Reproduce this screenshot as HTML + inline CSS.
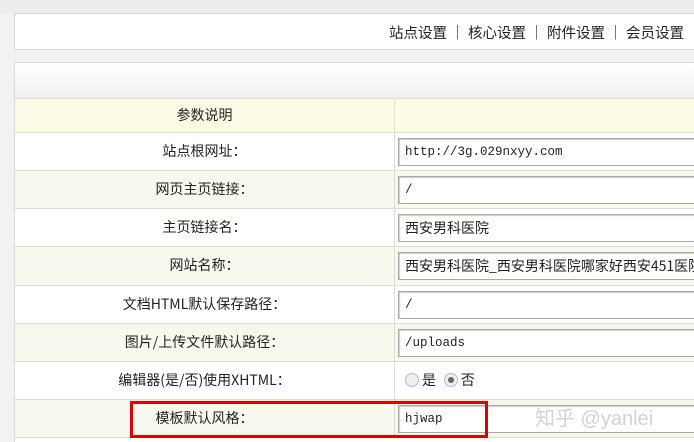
<!DOCTYPE html><html><head><meta charset="utf-8"><style>
html,body{margin:0;width:694px;height:442px;overflow:hidden}
body{background:#f2f2f2;font-family:"Liberation Sans","Noto Sans CJK SC",sans-serif;font-size:14px;color:#222;position:relative}
.top{position:absolute;left:0;top:0;width:694px;height:13px;background:#ededed}
.p1{position:absolute;left:14px;top:13px;width:690px;height:35px;background:#fff;border:1px solid #d8d8d8;border-right:none}
.nav{position:absolute;left:374px;top:8px;font-size:14.5px;white-space:nowrap;font-family:"Noto Sans CJK SC",sans-serif}
.p2{position:absolute;left:14px;top:62px;width:690px;height:400px;background:#fff;border:1px solid #d8d8d8;border-right:none}
.hd{height:35px;background:linear-gradient(#fff,#f0f0f0);border-bottom:1px solid #ddd}
.row{position:relative;border-bottom:1px solid #dcdcd0;height:37px}
.l{position:absolute;left:0;width:379px;height:100%;border-right:1px solid #dcdcd0;text-align:center;line-height:37px;font-family:"Noto Sans CJK SC",sans-serif}
.r{position:absolute;left:380px;right:0;height:100%}
.in{position:absolute;left:3px;top:5px;width:400px;height:26px;border:1px solid #a8a8a8;border-right:none;box-shadow:inset 1px 1px 1px #ccc;background:#fff;font-family:"Liberation Mono","Noto Sans CJK SC",monospace;font-size:12.5px;line-height:26px;padding-left:6px;white-space:nowrap;overflow:hidden}
.zh{font-family:"Noto Sans CJK SC",sans-serif;font-size:14px}
.t{background:#f8f9ee}
.rad{display:inline-block;width:12px;height:12px;border-radius:50%;border:1px solid #bbb;background:#eee;vertical-align:-2px;margin-right:3px;position:relative}
</style></head><body>
<div class="top"></div>
<div class="p1"><div class="nav">站点设置 ｜ 核心设置 ｜ 附件设置 ｜ 会员设置</div></div>
<div class="p2">
<div class="hd"></div>
<div class="row" style="background:#fbfbe6;height:33px"><div class="l" style="line-height:33px;border-color:#e4e4cc">参数说明</div></div>
<div class="row"><div class="l">站点根网址：</div><div class="r"><div class="in">http://3g.029nxyy.com</div></div></div>
<div class="row t"><div class="l">网页主页链接：</div><div class="r"><div class="in">/</div></div></div>
<div class="row"><div class="l">主页链接名：</div><div class="r"><div class="in zh">西安男科医院</div></div></div>
<div class="row t" style="height:38px"><div class="l">网站名称：</div><div class="r"><div class="in zh">西安男科医院_西安男科医院哪家好西安451医院</div></div></div>
<div class="row"><div class="l">文档HTML默认保存路径：</div><div class="r"><div class="in">/</div></div></div>
<div class="row t"><div class="l">图片/上传文件默认路径：</div><div class="r"><div class="in">/uploads</div></div></div>
<div class="row"><div class="l">编辑器(是/否)使用XHTML：</div><div class="r" style="line-height:37px;padding-left:10px;font-size:14px"><span class="rad"></span>是 &nbsp;<span class="rad"><span style="position:absolute;left:3px;top:3px;width:6px;height:6px;border-radius:50%;background:#666"></span></span>否</div></div>
<div class="row t"><div class="l">模板默认风格：</div><div class="r"><div class="in">hjwap</div><div style="position:absolute;left:140px;top:2px;font-size:20px;color:rgba(200,200,200,.8);font-family:'Liberation Sans','Noto Sans CJK SC',sans-serif">知乎 @yanlei</div></div></div>
</div>
<div style="position:absolute;left:130px;top:401px;width:352px;height:31px;border:3px solid #e00000"></div>
</body></html>
